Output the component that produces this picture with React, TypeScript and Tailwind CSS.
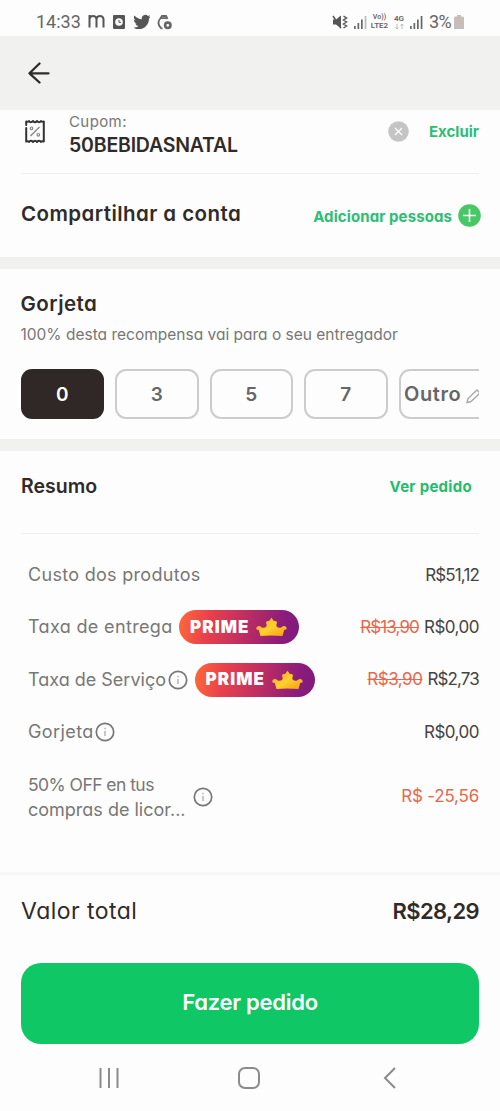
import type { ReactNode } from "react";

function InfoIcon() {
  return (
    <svg width="20" height="20" viewBox="0 0 20 20" fill="none" className="shrink-0">
      <circle cx="10" cy="10" r="8.7" stroke="#777" strokeWidth="1.7" />
      <path d="M10 9v5M10 5.8v1.4" stroke="#aaa" strokeWidth="1.3" />
    </svg>
  );
}

function PrimeBadge() {
  return (
    <span className="flex h-[34px] w-[120px] shrink-0 items-center rounded-full bg-[linear-gradient(100deg,#ff6a3a_0%,#e8404c_25%,#b52a66_60%,#8a1c7c_85%,#7d1b7c_100%)] pl-[11px]">
      <span className="w-[61px] text-[17px] font-black tracking-[1.1px] text-white">PRIME</span>
      <svg width="31" height="20" viewBox="0 0 31 20" className="ml-[5px]">
        <defs>
          <linearGradient id="crown" x1="0" y1="0" x2="1" y2="1">
            <stop offset="0" stopColor="#ffa51c" />
            <stop offset="0.5" stopColor="#ffd02b" />
            <stop offset="1" stopColor="#f49c19" />
          </linearGradient>
        </defs>
        <path
          d="M4.500 19 2.800 13 .6 12.600Q-.2 9.800 1.800 9.200q2.800-.6 4 1.400 2.700.8 4.400-.8.8-1.500.2-3-.9-1.600.5-2.500 1.300-.6 2.400-.6L15.500.8l2.200 2.900q1.100 0 2.400.6 1.400.9.5 2.500-.6 1.500.2 3 1.700 1.600 4.400.8 1.200-2 4-1.400 2 .6 1.200 3.400L28.200 13 26.500 19Q15.500 18 4.500 19Z"
          fill="url(#crown)"
        />
      </svg>
    </span>
  );
}

function Signal({ faded }: { faded?: boolean }) {
  return (
    <svg width="13" height="13" viewBox="0 0 13 13" fill="#666">
      <rect x="0" y="10" width="1.7" height="3" />
      <rect x="3.500" y="7" width="1.700" height="6" />
      <rect x="7" y="3.500" width="1.700" height="9.500" />
      <rect x="10.700" y="0" width="1.700" height="13" fill={faded ? "#bbb" : "#666"} />
    </svg>
  );
}

function Row({ className, label, children }: { className: string; label: ReactNode; children: ReactNode }) {
  return (
    <div className={`flex items-center justify-between ${className}`}>
      <div className="flex items-center text-[18px] text-[#777]">{label}</div>
      <div className="flex gap-[5px] text-[17px] tracking-[-0.7px] text-[#444]">{children}</div>
    </div>
  );
}

export default function App() {
  return (
    <div className="flex h-[1111px] w-[500px] flex-col overflow-hidden bg-[#fdfdfd] font-['Inter',sans-serif] leading-none whitespace-nowrap text-[#302b29] [font-feature-settings:'cv11']">
      <div className="flex h-9 shrink-0 items-center pt-[8px] pl-9 font-['Roboto',sans-serif] text-[#666]">
        <span className="w-[52px] text-[18px]">14:33</span>
        <svg width="17" height="14" viewBox="0 0 17 14" fill="none" stroke="#555" strokeWidth="2" className="mb-[2px]">
          <path d="M1.500 13.500V1M1.500 5Q2 2 5 2T8.500 5v8.500M8.500 5Q9 2 12 2t3.500 3v8.500" />
        </svg>
        <svg width="12" height="14" viewBox="0 0 12 14" className="ml-[8px]">
          <rect width="12" height="14" rx="1" fill="#555" />
          <circle cx="6" cy="7" r="3.800" fill="#fdfdfd" />
          <path d="M6 5v2.300h2" stroke="#555" fill="none" />
        </svg>
        <svg width="16" height="16" viewBox="1 2 22 20" fill="#555" className="ml-[9px]">
          <path d="M23.950 4.570a10 10 0 0 1-2.820.770 4.960 4.960 0 0 0 2.160-2.720 9.900 9.900 0 0 1-3.120 1.190 4.920 4.920 0 0 0-8.380 4.480C7.690 8.090 4.070 6.130 1.640 3.160a4.920 4.920 0 0 0 1.520 6.570 4.900 4.900 0 0 1-2.230-.61v.06a4.920 4.920 0 0 0 3.950 4.830 5 5 0 0 1-2.210.08 4.940 4.940 0 0 0 4.600 3.420A9.870 9.870 0 0 1 0 19.540a14 14 0 0 0 7.550 2.210c9.050 0 14-7.500 14-13.980 0-.21 0-.42-.02-.63a10 10 0 0 0 2.420-2.570z" />
        </svg>
        <svg width="15" height="15" viewBox="0 0 15 15" fill="none" stroke="#666" strokeWidth="1.800" className="ml-[7px]">
          <path d="M4 13.200Q-.8 8 3.300 3.500L5 1h4l1.500 3" />
          <path d="M3.500 3.200h6M3.500 13.300h2" />
          <circle cx="10.800" cy="10.300" r="2.700" strokeWidth="2.600" />
        </svg>
        <svg width="16" height="14" viewBox="0 0 16 14" className="ml-[160px]" fill="#555">
          <path d="M1 4.500h3L9 .5v13L4 9.500H1z" />
          <path d="M1 1 9 13M11.500 1l3 2-3 2 3 2-3 2 3 2-3 2" fill="none" stroke="#555" strokeWidth="1.500" />
        </svg>
        <span className="ml-[6px] flex"><Signal faded /></span>
        <span className="ml-[3px] flex w-[19px] flex-col items-center gap-px text-[8px] leading-[8px] font-semibold">
          <span className="h-[7px] leading-[7px] text-[7px]">Vo))</span>
          <span className="h-[8px] text-[8px]">LTE2</span>
        </span>
        <span className="ml-[4px] flex w-[12px] flex-col items-center text-[8px] leading-[8px] font-semibold">
          <span>4G</span>
          <svg width="9" height="7" viewBox="0 0 9 7" fill="none" stroke="#bbb">
            <path d="M2 1v5M.5 4.500 2 6l1.500-1.500M7 6V1M5.500 2.500 7 1l1.500 1.500" />
          </svg>
        </span>
        <span className="ml-[5px] flex"><Signal /></span>
        <span className="ml-[6px] text-[18px] tracking-[-0.700px]">3%</span>
        <svg width="10" height="14" viewBox="0 0 10 14" fill="#c9bdba" className="ml-[3px]">
          <path d="M3 0h4v1.500h1.500Q10 1.500 10 3v11H0V3Q0 1.500 1.500 1.500H3z" />
        </svg>
      </div>

      <div className="flex h-[74px] shrink-0 items-center bg-[#f1f1ef] pl-[28px]">
        <svg width="22" height="22" viewBox="0 0 22 22" fill="none" stroke="#302b29" strokeWidth="2.300" strokeLinecap="round" strokeLinejoin="round">
          <path d="M11.500 1.500 1.500 11.300l10 9.200M1.500 11.300h19" />
        </svg>
      </div>

      <div className="mx-[21px] flex h-[64px] shrink-0 border-b border-[#eee]">
        <svg width="20" height="25" viewBox="0 0 20 25" fill="none" className="mt-[9px] ml-[4px]">
          <path d="M1.200 6V2.500q1.800.8 2.800-.5 1.500 2.400 4 0 2 2.400 4 0 2.500 2.400 4 0 1 1.300 2.800.5v20q-1.800-.8-2.800.5-1.500-2.400-4 0-2-2.400-4 0-2.500-2.400-4 0-1 -1.300-2.800-.5V9" stroke="#333" strokeWidth="2" strokeLinecap="round" strokeLinejoin="round" />
          <path d="m5.500 17 9-9" stroke="#888" strokeWidth="1.500" />
          <circle cx="6.500" cy="9.300" r="1.300" stroke="#888" strokeWidth="1.200" />
          <circle cx="13.300" cy="15.800" r="1.300" stroke="#888" strokeWidth="1.200" />
        </svg>
        <div className="ml-[24px] flex flex-1 flex-col">
          <span className="mt-[4px] text-[15px] tracking-[0.400px] text-[#777]">Cupom:</span>
          <span className="mt-[7px] text-[19.500px] font-semibold tracking-[-0.200px]">50BEBIDASNATAL</span>
        </div>
        <svg width="21" height="21" viewBox="0 0 21 21" className="mt-[11px]">
          <circle cx="10.500" cy="10.500" r="10.300" fill="#c4c4c4" />
          <path d="m7 7 7 7m0-7-7 7" stroke="#fff" strokeWidth="1.200" />
        </svg>
        <span className="mt-[14px] ml-[20px] w-[50px] text-[15px] font-bold text-[#2dbd74]">Excluir</span>
      </div>

      <div className="flex h-[83px] shrink-0 items-center pr-[19px] pl-[21px]">
        <span className="flex-1 pb-[2px] text-[20.500px] font-semibold tracking-[0.430px]">Compartilhar a conta</span>
        <span className="pt-px text-[15px] font-bold tracking-[0.100px] text-[#2dbd74]">Adicionar pessoas</span>
        <svg width="23" height="23" viewBox="0 0 23 23" className="ml-[6px]">
          <circle cx="11.500" cy="11.500" r="11.300" fill="#48c766" />
          <path d="M11.500 5v13M5 11.500h13" stroke="#fff" strokeWidth="1.600" />
        </svg>
      </div>

      <div className="h-[12px] shrink-0 bg-[#f1f1ef]" />

      <div className="flex h-[170px] shrink-0 flex-col pr-[21px] pl-[20.500px]">
        <span className="mt-[25px] h-[20px] text-[20.500px] font-semibold tracking-[0.450px]">Gorjeta</span>
        <span className="mt-[13px] h-[15px] text-[15.500px] text-[#777]">100% desta recompensa vai para o seu entregador</span>
        <div className="mt-[27px] flex gap-[11px] overflow-hidden text-[19px] font-semibold text-[#666]">
          <div className="flex h-[50px] w-[83.500px] shrink-0 items-center justify-center rounded-[11px] bg-[#302826] text-white">0</div>
          {["3", "5", "7"].map((n) => (
            <div key={n} className="flex h-[50px] w-[83.500px] shrink-0 items-center justify-center rounded-[11px] border-2 border-[#ccc]">{n}</div>
          ))}
          <div className="flex h-[50px] w-[100px] shrink-0 items-center rounded-[11px] border-2 border-[#ccc] pl-[3.500px]">
            <span className="text-[20px] tracking-[0.600px]">Outro</span>
            <svg width="16" height="16" viewBox="0 0 16 16" fill="none" stroke="#aaa" strokeWidth="1.400" className="mt-[3px] ml-[5px] shrink-0">
              <path d="m1 14.500 1-4L11 2l3 3-9 8.500z" />
            </svg>
          </div>
        </div>
      </div>

      <div className="h-[12px] shrink-0 bg-[#f1f1ef]" />

      <div className="mx-[21px] flex h-[83px] shrink-0 items-start justify-between border-b border-[#eee] pr-[7px]">
        <span className="mt-[26px] text-[19.500px] font-semibold">Resumo</span>
        <span className="mt-[28px] text-[15px] font-bold tracking-[0.300px] text-[#1fbd6c]">Ver pedido</span>
      </div>

      <div className="flex h-[338px] shrink-0 flex-col pt-[15px] pr-[21px] pl-[28px]">
        <Row className="h-[52px]" label={<span className="tracking-[0.300px]">Custo dos produtos</span>}><span className="tracking-[-0.850px]">R$51,12</span></Row>
        <Row className="h-[52px]" label={<><span className="w-[151px] tracking-[0.350px]">Taxa de entrega</span><PrimeBadge /></>}>
          <span className="tracking-[-0.900px] text-[#e9674d] line-through">R$13,90</span>
          <span className="tracking-[-0.500px]">R$0,00</span>
        </Row>
        <Row className="h-[53px]" label={<><span className="w-[139.500px]">Taxa de Serviço</span><InfoIcon /><span className="ml-[7px] flex"><PrimeBadge /></span></>}>
          <span className="tracking-[-0.500px] text-[#e9674d] line-through">R$3,90</span>
          <span className="tracking-[-0.850px]">R$2,73</span>
        </Row>
        <Row className="h-[52px]" label={<><span className="w-[67px] tracking-[0.400px]">Gorjeta</span><InfoIcon /></>}><span className="tracking-[-0.500px]">R$0,00</span></Row>
        <Row className="h-[77px]" label={<><span className="w-[164.500px] leading-[25px]"><span className="text-[17.500px] tracking-[-0.550px]">50% OFF en tus</span><br /><span>compras de licor...</span></span><InfoIcon /></>}>
          <span className="tracking-[-0.200px] text-[#e9674d]">R$ -25,56</span>
        </Row>
      </div>

      <div className="flex h-[91px] shrink-0 items-center justify-between border-t-[3px] border-[#f7f7f7] px-[21px] pb-[16px]">
        <span className="text-[23px] tracking-[0.450px]">Valor total</span>
        <span className="text-[22px] font-semibold tracking-[-0.600px]">R$28,29</span>
      </div>
      <div className="mx-[21px] flex h-[81px] shrink-0 items-center justify-center rounded-[20px] bg-[#0fc765] pb-[4px] text-[22px] font-semibold tracking-[-0.250px] text-white">Fazer pedido</div>
      <div className="flex h-[67px] items-center justify-center">
        <svg width="302" height="24" viewBox="0 0 302 24" fill="none" stroke="#8b8b8b" strokeWidth="2">
          <path d="M1.500 2v20M10 2v20M18.500 2v20" />
          <rect x="140" y="2" width="20" height="20" rx="6" />
          <path d="M296 2 286 12l10 10" />
        </svg>
      </div>
    </div>
  );
}
